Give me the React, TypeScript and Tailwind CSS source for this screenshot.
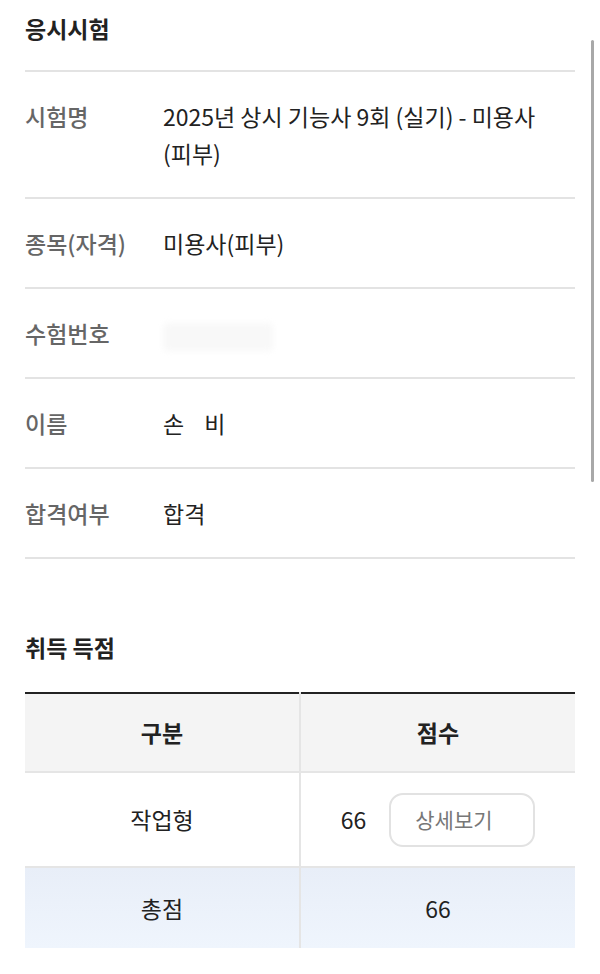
import React from 'react'

const FONT = { fontFamily: '"Noto Sans CJK KR", "Noto Sans", sans-serif' }

type InfoRow = { label: string; value: React.ReactNode }

const rows: InfoRow[] = [
  {
    label: '시험명',
    value: (
      <>
        2025년 상시 기능사 9회 (실기) - 미용사<span className="whitespace-nowrap">(피부)</span>
      </>
    ),
  },
  { label: '종목(자격)', value: '미용사(피부)' },
  {
    label: '수험번호',
    value: <span className="inline-block w-[110px] h-[28px] align-middle rounded bg-[#f8f8f8] blur-[3px]" />,
  },
  {
    label: '이름',
    value: (
      <>
        손<span className="ml-[20px]">비</span>
      </>
    ),
  },
  { label: '합격여부', value: '합격' },
]

export default function App() {
  return (
    <div className="relative min-h-screen bg-white text-[#222]" style={FONT}>
      {/* overlay scrollbar */}
      <div className="absolute right-[6px] top-[40px] w-[3px] h-[442px] rounded-full bg-[#a8a8a8]" />

      <div className="px-[25px] pt-[10px]">
        <h2 className="text-[23px] font-bold leading-[37px]">응시시험</h2>

        <div className="mt-[23px] border-t-2 border-[#e3e3e3]">
          {rows.map((r) => (
            <div key={r.label} className="flex pt-[26px] pb-[25px] border-b-2 border-[#e3e3e3] text-[23px] leading-[37px]">
              <div className="w-[138px] shrink-0 text-[#666] font-medium">{r.label}</div>
              <div className="flex-1 text-[#222]">{r.value}</div>
            </div>
          ))}
        </div>

        <h2 className="mt-[70px] text-[23px] font-bold leading-[37px]">취득 득점</h2>

        <table className="mt-[26px] w-full border-collapse border-t-2 border-[#222] text-[23px]">
          <thead>
            <tr className="bg-[#f4f4f4] h-[79px] border-b-2 border-[#e5e5e5]">
              <th className="w-1/2 font-bold border-r-2 border-[#e5e5e5]">구분</th>
              <th className="w-1/2 font-bold">점수</th>
            </tr>
          </thead>
          <tbody>
            <tr className="h-[95px] border-b-2 border-[#e5e5e5]">
              <td className="text-center border-r-2 border-[#e5e5e5]">작업형</td>
              <td>
                <div className="flex items-center justify-center gap-[23px]">
                  <span>66</span>
                  <button className="w-[146px] h-[54px] pl-6 text-left rounded-[14px] border-2 border-[#e2e2e2] bg-white text-[21px] text-[#777]">
                    상세보기
                  </button>
                </div>
              </td>
            </tr>
            <tr className="h-[81px] bg-gradient-to-b from-[#e8eef8] to-[#eff5fd]">
              <td className="text-center border-r-2 border-[#e5e5e5]">총점</td>
              <td className="text-center">66</td>
            </tr>
          </tbody>
        </table>
      </div>
    </div>
  )
}
